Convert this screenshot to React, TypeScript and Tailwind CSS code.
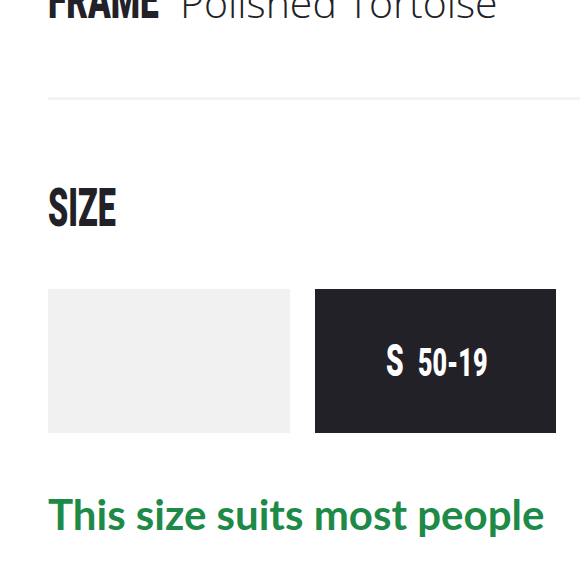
import React from "react";

const cond = { fontFamily: "Roboto, 'Liberation Sans', sans-serif" };

export default function App() {
  return (
    <div className="w-[580px] h-[580px] overflow-hidden bg-white">
      <div className="pl-[48px]">
        <div className="flex items-baseline -mt-[26px]">
          <div className="w-[132px] shrink-0">
            <span
              style={cond}
              className="inline-block origin-left scale-x-[0.63] text-[53px] leading-none font-black text-[#222128] whitespace-nowrap"
            >
              FRAME
            </span>
          </div>
          <span
            style={{ fontFamily: "'Open Sans', sans-serif" }}
            className="text-[41px] leading-none font-light text-[#222128] whitespace-nowrap"
          >
            Polished Tortoise
          </span>
        </div>
        <div className="h-[3px] bg-[#f3f3f3] mt-[70px]" />
        <div className="mt-[82px]">
          <span
            style={cond}
            className="inline-block origin-left scale-x-[0.61] text-[53px] leading-none font-black text-[#222128]"
          >
            SIZE
          </span>
        </div>
        <div className="mt-[54px] grid grid-cols-[242px_241px] gap-x-[25px]">
          <div className="h-[144px] bg-[#f1f1f1]" />
          <div className="h-[144px] bg-[#222127] flex items-center justify-center">
            <div className="flex items-baseline gap-x-[14px]">
              <div className="w-[18px]">
                <span
                  style={cond}
                  className="inline-block origin-left scale-x-[0.64] text-[44px] leading-none font-black text-white"
                >
                  S
                </span>
              </div>
              <div className="w-[68px]">
                <span
                  style={cond}
                  className="inline-block origin-left scale-x-[0.66] text-[38px] leading-none font-black text-white whitespace-nowrap"
                >
                  50-19
                </span>
              </div>
            </div>
          </div>
        </div>
        <div
          style={{ fontFamily: "Lato, sans-serif" }}
          className="mt-[60px] text-[42px] leading-none font-bold text-[#1e8a48] whitespace-nowrap"
        >
          This size suits most people
        </div>
      </div>
    </div>
  );
}
